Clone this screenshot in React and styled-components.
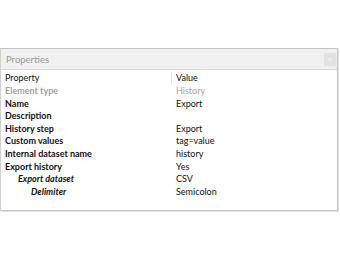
import React from "react";
import styled, { createGlobalStyle } from "styled-components";

const GlobalStyle = createGlobalStyle`
  html, body {
    margin: 0;
    padding: 0;
    background: #ffffff;
  }
  body {
    width: 340px;
    height: 260px;
    overflow: hidden;
    font-family: Lato, "Noto Sans", sans-serif;
  }
`;

const Page = styled.div`
  padding-top: 48px;
  padding-right: 2px;
`;

const Window = styled.div`
  border: 1px solid #c4c4c4;
  border-left-color: #d0d0d0;
  background: #ffffff;
  box-shadow: 1px 1px 0 #e2e2e2;
`;

const TitleBar = styled.div`
  height: 20px;
  display: flex;
  align-items: center;
  justify-content: space-between;
  padding: 0 1px 0 5px;
  background: #f0f0f0;
  border-bottom: 1px solid #d9d9d9;
`;

const Title = styled.span`
  font-size: 9.5px;
  color: #9a9a9a;
`;

const CloseButton = styled.div`
  width: 12px;
  height: 13px;
  background: #e2e2e2;
  color: #f4f4f4;
  font-size: 8px;
  display: flex;
  align-items: center;
  justify-content: center;
`;

const Grid = styled.div`
  display: grid;
  grid-template-columns: 171px 1fr;
  padding-bottom: 12px;
`;

const Cell = styled.div`
  height: 12.6px;
  line-height: 12.6px;
  font-size: 9px;
  white-space: nowrap;
  padding-left: ${(p) => (p.$value ? 4 : 4 + p.$indent * 13)}px;
  color: ${(p) => (p.$muted ? "#a2a2a2" : "#111111")};
  font-weight: ${(p) => (p.$bold ? 700 : 400)};
  font-style: ${(p) => (p.$italic ? "italic" : "normal")};
`;

const HeaderCell = styled(Cell)`
  margin-top: 2px;
  height: 13px;
  color: #111111;
  border-right: ${(p) => (p.$value ? "none" : "1px solid #e4e4e4")};
`;

const rows = [
  { name: "Element type", value: "History", muted: true },
  { name: "Name", value: "Export" },
  { name: "Description", value: "" },
  { name: "History step", value: "Export" },
  { name: "Custom values", value: "tag=value" },
  { name: "Internal dataset name", value: "history" },
  { name: "Export history", value: "Yes" },
  { name: "Export dataset", value: "CSV", indent: 1 },
  { name: "Delimiter", value: "Semicolon", indent: 2 },
];

const App = () => {
  return (
    <Page>
      <GlobalStyle />
      <Window>
        <TitleBar>
          <Title>Properties</Title>
          <CloseButton>×</CloseButton>
        </TitleBar>
        <Grid>
          <HeaderCell $indent={0}>Property</HeaderCell>
          <HeaderCell $value>Value</HeaderCell>
          {rows.map((row) => (
            <React.Fragment key={row.name}>
              <Cell
                $indent={row.indent || 0}
                $bold
                $muted={row.muted}
                $italic={!!row.indent}
              >
                {row.name}
              </Cell>
              <Cell $value $muted={row.muted}>
                {row.value}
              </Cell>
            </React.Fragment>
          ))}
        </Grid>
      </Window>
    </Page>
  );
};

export default App;
